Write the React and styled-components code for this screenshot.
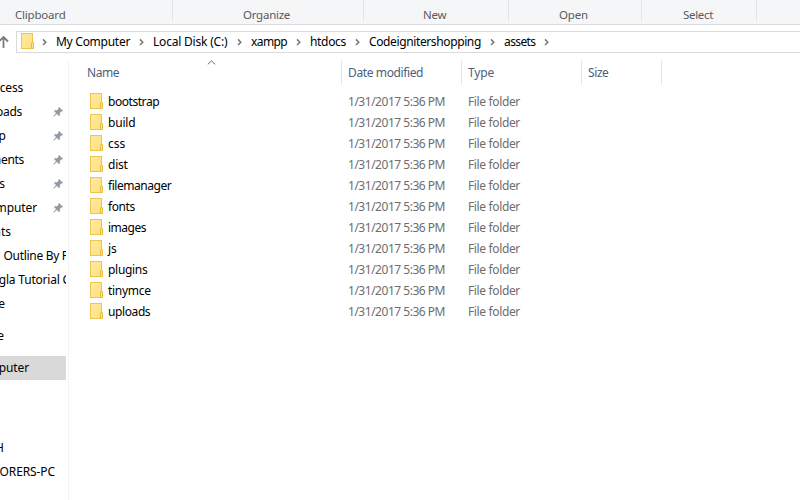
import React from "react";
import styled, { createGlobalStyle } from "styled-components";

const Global = createGlobalStyle`
  * { box-sizing: border-box; }
  body { margin: 0; background: #fff; overflow: hidden; }
`;

const Window = styled.div`
  width: 800px;
  height: 500px;
  overflow: hidden;
  background: #fff;
  color: #000;
  font: 12px/20px "Noto Sans", "Open Sans", sans-serif;
  white-space: nowrap;
  display: flex;
  flex-direction: column;
`;

const Label = styled.span`
  letter-spacing: ${(p) => p.$ls || 0}px;
`;

const Ribbon = styled.div`
  display: flex;
  flex: none;
  height: 25px;
  background: #f5f6f7;
  border-bottom: 1px solid #dadbdc;
`;

const RibbonGroup = styled.div`
  flex: none;
  width: ${(p) => p.$width}px;
  height: 21px;
  padding: 5px 0 0 ${(p) => p.$inset}px;
  border-right: 1px solid #e2e3e4;
  color: #5a5a5a;
  font-size: 11.5px;
`;

const AddressRow = styled.div`
  display: flex;
  flex: none;
  height: 35px;
  padding-top: 6px;
`;

const UpArrow = styled.svg`
  flex: none;
  width: 16px;
  height: 22px;
`;

const AddressBar = styled.div`
  display: flex;
  flex: none;
  width: 790px;
  height: 22px;
  padding-left: 4px;
  border: 1px solid #d9d9d9;
`;

const FolderSvg = styled.svg`
  flex: none;
  display: block;
  width: 14px;
  height: 17px;
  margin-top: ${(p) => p.$top || 0}px;
`;

const Lead = styled.div`
  width: 21px;
  flex: none;
  display: flex;
  justify-content: flex-end;
  padding-right: 9px;
`;

const Crumb = styled.div`
  flex: none;
  display: flex;
  justify-content: space-between;
  width: ${(p) => p.$width}px;
  padding-right: 9px;
`;

const ChevronSvg = styled.svg`
  flex: none;
  width: 5px;
  height: 20px;
`;

const Body = styled.div`
  display: flex;
  flex: 1;
  min-height: 0;
`;

const Sidebar = styled.nav`
  flex: none;
  width: 69px;
  padding-top: 16px;
  border-right: 1px solid #f3f3f3;
`;

const NavRow = styled.div`
  display: flex;
  width: 66px;
  height: 24px;
  line-height: 24px;
  overflow: hidden;
  margin-top: ${(p) => p.$gap || 0}px;
  background: ${(p) => (p.$selected ? "#d9d9d9" : "transparent")};
`;

const NavText = styled.div`
  flex: none;
  display: flex;
  justify-content: flex-end;
  width: ${(p) => p.$end}px;
  letter-spacing: ${(p) => p.$ls || 0}px;
`;

const PinSvg = styled.svg`
  flex: none;
  width: 10px;
  height: 10px;
  margin: 7px 3px 0 auto;
`;

const Listing = styled.main`
  flex: none;
`;

const HeaderRow = styled.div`
  display: flex;
  height: 25px;
  margin-bottom: 6px;
`;

const HeaderCell = styled.div`
  position: relative;
  width: ${(p) => p.$width}px;
  padding: 3px 0 0 ${(p) => p.$inset}px;
  border-right: 1px solid #e5e5e5;
  color: #4c607a;
`;

const SortSvg = styled.svg`
  position: absolute;
  left: 138px;
  top: 0;
  width: 9px;
  height: 5px;
`;

const FileRow = styled.div`
  display: grid;
  grid-template-columns: 18px 240px 120px 120px;
  height: 21px;
  line-height: 21px;
  padding-left: 21px;
`;

const Meta = styled.div`
  color: #6d6d6d;
  letter-spacing: ${(p) => p.$ls || 0}px;
`;

const Folder = ({ top }) => (
  <FolderSvg $top={top} viewBox="0 0 14 17">
    <defs>
      <linearGradient id="folder" x1="0" y1="0" x2="1" y2="1">
        <stop offset="0" stopColor="#ffeaa4" />
        <stop offset="1" stopColor="#ffe07e" />
      </linearGradient>
    </defs>
    <rect x="0.5" y="0.5" width="11" height="15" fill="url(#folder)" stroke="#ecc64f" />
    <path d="M10.5 15.5v-5.5l0.6-0.5h1.4v6z" fill="#ffe38d" stroke="#e7bd3f" />
  </FolderSvg>
);

const Chevron = () => (
  <ChevronSvg viewBox="0 0 5 20">
    <path d="M1 7.4l2.8 2.8L1 13" fill="none" stroke="#767676" strokeWidth="1.5" />
  </ChevronSvg>
);

const Pin = () => (
  <PinSvg viewBox="0 0 10 10">
    <path
      d="M6 0L10 3.8 9.1 4.6 8.4 4.4 6.9 6 6.9 8.3 6 9 3.8 6.9 0.5 9.8 0 9.5 3 6.1 0.9 4 1.8 3.2 4 3.2 5.5 1.7 5.3 0.8z"
      fill="#929ca6"
    />
  </PinSvg>
);

const groups = [
  ["Clipboard", 173, 15, -0.2],
  ["Organize", 191, 70, -0.25],
  ["New", 145, 59, -0.3],
  ["Open", 133, 50, -0.2],
  ["Select", 115, 41, -0.3],
];

const crumbs = [
  ["My Computer", 97, -0.27],
  ["Local Disk (C:)", 98, -0.2],
  ["xampp", 59, -0.6],
  ["htdocs", 59, -0.33],
  ["Codeignitershopping", 135, -0.38],
  ["assets", 54, -0.6],
];

const nav = [
  { text: "ccess", end: 23, ls: -0.2 },
  { text: "loads", end: 22, ls: -0.3, pin: true },
  { text: "op", end: 6, pin: true },
  { text: "ments", end: 24, ls: -0.3, pin: true },
  { text: "es", end: 5, pin: true },
  { text: "omputer", end: 37, ls: -0.1, pin: true },
  { text: "nts", end: 11 },
  { text: "Outline By R", end: 69, ls: -0.3 },
  { text: "ngla Tutorial C", end: 70, ls: -0.2 },
  { text: "e", end: 5 },
  { text: "e", end: 4, gap: 8 },
  { text: "mputer", end: 29, ls: -0.1, gap: 8, selected: true },
  { text: "H", end: 4, gap: 56 },
  { text: "ORERS-PC", end: 55, ls: -0.1 },
];

const columns = [
  ["Name", 273, 18, -0.4],
  ["Date modified", 120, 6, -0.38],
  ["Type", 120, 6, -0.15],
  ["Size", 80, 6, -0.4],
];

const files = [
  ["bootstrap", -0.45],
  ["build", -0.2],
  ["css", 0],
  ["dist", -0.25],
  ["filemanager", -0.45],
  ["fonts", -0.4],
  ["images", -0.5],
  ["js", 0],
  ["plugins", -0.3],
  ["tinymce", -0.3],
  ["uploads", -0.4],
];

export default function App() {
  return (
    <Window>
      <Global />
      <Ribbon>
        {groups.map(([name, width, inset, ls]) => (
          <RibbonGroup key={name} $width={width} $inset={inset}>
            <Label $ls={ls}>{name}</Label>
          </RibbonGroup>
        ))}
      </Ribbon>
      <AddressRow>
        <UpArrow viewBox="0 0 16 22">
          <path d="M3.5 17V6M-1 10.5l4.5-4.5L8 10.5" fill="none" stroke="#7a7a7a" strokeWidth="1.8" />
        </UpArrow>
        <AddressBar>
          <Folder top={1} />
          <Lead>
            <Chevron />
          </Lead>
          {crumbs.map(([name, width, ls]) => (
            <Crumb key={name} $width={width}>
              <Label $ls={ls}>{name}</Label>
              <Chevron />
            </Crumb>
          ))}
        </AddressBar>
      </AddressRow>
      <Body>
        <Sidebar>
          {nav.map((n, i) => (
            <NavRow key={i} $gap={n.gap} $selected={n.selected}>
              <NavText $end={n.end} $ls={n.ls}>
                {n.text}
              </NavText>
              {n.pin && <Pin />}
            </NavRow>
          ))}
        </Sidebar>
        <Listing>
          <HeaderRow>
            {columns.map(([name, width, inset, ls], i) => (
              <HeaderCell key={name} $width={width} $inset={inset}>
                <Label $ls={ls}>{name}</Label>
                {i === 0 && (
                  <SortSvg viewBox="0 0 9 5">
                    <path d="M0.8 4.4L4.5 0.9l3.7 3.5" fill="none" stroke="#6a6a6a" />
                  </SortSvg>
                )}
              </HeaderCell>
            ))}
          </HeaderRow>
          {files.map(([name, ls]) => (
            <FileRow key={name}>
              <Folder top={2} />
              <Label $ls={ls}>{name}</Label>
              <Meta $ls={-0.48}>1/31/2017 5:36 PM</Meta>
              <Meta $ls={-0.36}>File folder</Meta>
            </FileRow>
          ))}
        </Listing>
      </Body>
    </Window>
  );
}
